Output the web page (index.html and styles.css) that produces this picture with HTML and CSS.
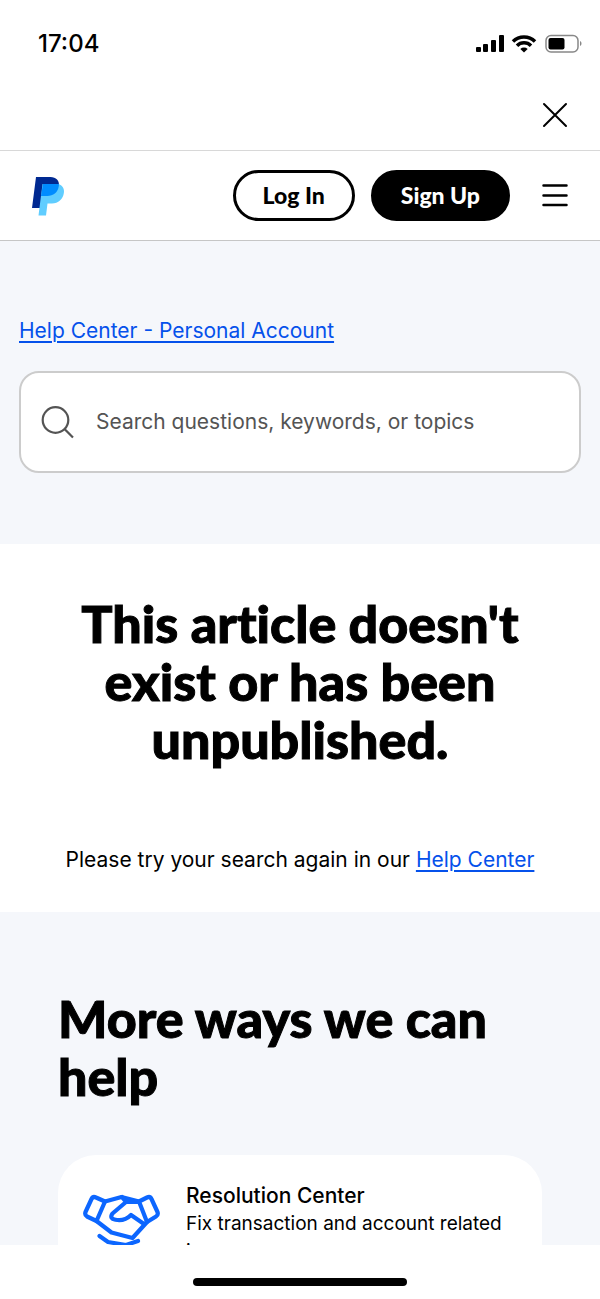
FILE: index.html
```html
<!DOCTYPE html>
<html lang="en">
<head>
  <meta charset="UTF-8" />
  <meta name="viewport" content="width=device-width, initial-scale=1" />
  <title>Help Center - Personal Account</title>
  <link rel="stylesheet" href="styles.css">
</head>
<body>

<div class="status-bar">
  <span class="time">17:04</span>
  <svg width="106" height="20" viewBox="0 0 106 20">
    <!-- signal -->
    <rect x="0" y="13" width="5" height="5" rx="1" />
    <rect x="7" y="10" width="5" height="8" rx="1" />
    <rect x="15" y="6" width="5" height="12" rx="1" />
    <rect x="23" y="1" width="5" height="17" rx="1" />
    <!-- wifi -->
    <g fill="none" stroke="#000" stroke-width="3.500">
      <path d="M37 7.500a15.500 15.500 0 0 1 22 0" />
      <path d="M41 11.700a9.800 9.800 0 0 1 14 0" />
    </g>
    <path d="M44.300 15a5.500 5.500 0 0 1 7.400 0L48 18.500z" />
    <!-- battery -->
    <rect x="70" y="1.500" width="32" height="16.500" rx="5" fill="none" stroke="#888" stroke-width="1.500" />
    <rect x="72.500" y="4" width="16" height="11.500" rx="2" />
    <path d="M104 7c2 .8 2 4.200 0 5z" fill="#888" />
  </svg>
</div>

<div class="close-bar">
  <button class="icon-button" aria-label="Close">
    <svg width="26" height="26" viewBox="0 0 26 26" fill="none" stroke="#000" stroke-width="2" stroke-linecap="round">
      <path d="M2 2l22 22M24 2L2 24" />
    </svg>
  </button>
</div>

<div class="page">
  <header class="header">
    <a href="#" class="logo" aria-label="PayPal">
      <svg width="33" height="40" viewBox="0 0 33 40">
        <path d="M4 1h14.500c5.500 0 9.200 3.800 8.300 8.500-1 6-5.500 9.500-11.500 9.500h-5L8 32H0z" fill="#002991" />
        <path d="M10.500 8h16.200c4 1.700 5.800 5 5.200 8.800-1 6.700-5.500 10.700-12 10.700h-4.400L14 39.500H6.500z" fill="#60cdff" />
        <path d="M11 8h15.800c.2 1 .2 1-.1 2.500C25.700 16.500 21.300 20 15.300 20H9z" fill="#008cff" />
      </svg>
    </a>
    <nav class="nav">
      <button class="pill">Log In</button>
      <button class="pill pill-dark">Sign Up</button>
      <button class="icon-button menu" aria-label="Menu">
        <svg width="26" height="24" viewBox="0 0 26 24" stroke="#000" stroke-width="2.500" stroke-linecap="round">
          <path d="M1.500 1.500h23M1.500 11.500h23M1.500 21h23" />
        </svg>
      </button>
    </nav>
  </header>

  <section class="search-section">
    <a href="#">Help Center - Personal Account</a>
    <label class="search-box">
      <svg width="34" height="34" viewBox="0 0 34 34" fill="none" stroke="#545454" stroke-width="2.200">
        <circle cx="15.500" cy="15" r="12.800" />
        <path d="M24.500 24l8.500 8.500" />
      </svg>
      <input type="search" placeholder="Search questions, keywords, or topics" aria-label="Search">
    </label>
  </section>

  <main class="message">
    <h1>This article doesn't exist or has been unpublished.</h1>
    <p>Please try your search again in our <a href="#">Help Center</a></p>
  </main>

  <section class="more">
    <h2>More ways we can help</h2>
    <div class="card">
      <svg width="78" height="68" viewBox="0 0 78 68" fill="none" stroke="#0c66ff" stroke-width="4.200" stroke-linejoin="round" stroke-linecap="round">
        <path d="M22 10.500L13 6.500Q10 5 8.500 8L2.500 21Q1.500 24 4 25.500L13.500 30z" />
        <path d="M56 10.500L64 6.500Q67 5 68.500 8L74.500 21Q75.500 24 73 25.500L64 31z" />
        <path d="M22 10.500l16.500-4.500L56 10.500M13.500 30l15 11.500 21 5.500L64 31" />
        <path d="M39 6l4 5h13M43 11L29.500 22.500c-2.500 3.500-1 5.500 3 6.300 7 1.400 11-.3 15.500-4.800L61 33" />
        <path d="M16.500 45l8.500 6 18 3 12-4" />
      </svg>
      <div class="card-text">
        <h3>Resolution Center</h3>
        <p>Fix transaction and account related issues.</p>
      </div>
    </div>
  </section>
</div>

<div class="home-bar"><span class="home-line"></span></div>

</body>
</html>
```
FILE: styles.css
```css
* {
  box-sizing: border-box;
}

body {
  margin: 0;
  height: 100vh;
  display: flex;
  flex-direction: column;
  background: white;
  color: black;
  font-family: Inter, "Liberation Sans", sans-serif;
  font-size: 21px;
  line-height: 28px;
}

h1, h2, h3, p {
  margin: 0;
}

a {
  color: #0551eb;
  text-underline-offset: 3px;
  text-decoration-thickness: 2px;
}

svg {
  display: block;
  flex-shrink: 0;
}

h1, h2 {
  font-family: Lato, sans-serif;
  font-weight: 900;
  font-size: 52px;
  line-height: 58px;
  font-variant-ligatures: none;
  -webkit-text-stroke: 1px black;
}

.status-bar {
  display: flex;
  justify-content: space-between;
  align-items: center;
  height: 88px;
  padding: 0 18px 0 38px;
  font-weight: 500;
  font-size: 24px;
}

.close-bar {
  display: flex;
  justify-content: flex-end;
  padding: 14px 32px 22px;
  border-bottom: 1px solid #d8d8d8;
}

.icon-button {
  background: none;
  border: none;
  padding: 0;
  cursor: pointer;
}

.page {
  flex: 1;
  min-height: 0;
  overflow: hidden;
}

.header {
  display: flex;
  justify-content: space-between;
  align-items: center;
  height: 90px;
  padding: 0 32px;
  border-bottom: 1px solid #c6c6c6;
}

.nav {
  display: flex;
  align-items: center;
  gap: 16px;
}

.pill {
  height: 51px;
  padding: 0 27px 2px;
  border: 3px solid black;
  border-radius: 26px;
  background: white;
  color: black;
  font-family: Lato, sans-serif;
  font-weight: 900;
  font-size: 23px;
  cursor: pointer;
}

.pill-dark {
  background: black;
  color: white;
}

.menu {
  margin-left: 16px;
}

.search-section {
  padding: 76px 19px 71px;
  background: #f5f7fb;
}

.search-box {
  display: flex;
  align-items: center;
  gap: 20px;
  height: 102px;
  margin-top: 26px;
  padding: 0 19px;
  border: 2px solid #ccc;
  border-radius: 20px;
  background: white;
}

.search-box input {
  flex: 1;
  min-width: 0;
  padding: 0 2px;
  border: none;
  outline: none;
  font: inherit;
}

.search-box input::placeholder {
  color: #545454;
}

.message {
  padding: 50px 20px 38px;
  text-align: center;
}

.message h1 {
  padding: 0 46px;
}

.message p {
  margin-top: 78px;
}

.more {
  padding: 77px 58px;
  background: #f5f7fb;
}

.card {
  display: flex;
  gap: 25px;
  margin-top: 50px;
  padding: 27px 25px;
  border-radius: 38px;
  background: white;
}

.card svg {
  margin-top: 9px;
}

.card h3 {
  font-size: 21px;
  font-weight: 500;
}

.card p {
  font-size: 19px;
  line-height: 28px;
}

.home-bar {
  display: flex;
  justify-content: center;
  height: 54px;
  padding-top: 33px;
}

.home-line {
  width: 214px;
  height: 8px;
  border-radius: 4px;
  background: black;
}
```
